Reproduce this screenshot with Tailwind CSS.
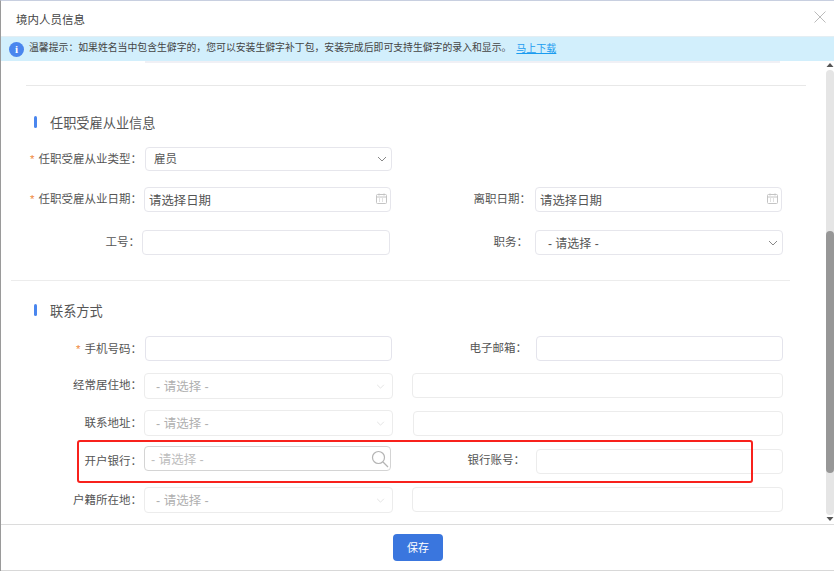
<!DOCTYPE html>
<html lang="zh-CN">
<head>
<meta charset="utf-8">
<script src="https://cdn.jsdelivr.net/npm/@tailwindcss/browser@4"></script>
</head>
<body class="bg-white">
<div class="relative w-[834px] h-[571px] overflow-hidden flex flex-col bg-white border-l border-l-[#9a9a9a] border-t border-t-[#c8cfe0] font-['Liberation_Sans','Noto_Sans_CJK_SC',sans-serif] text-[11.5px] text-[#555]">
  <header class="h-[35px] shrink-0 flex items-center justify-between pl-[15px] pr-[8px]">
    <h1 class="pt-[4px] text-[11.5px] font-normal text-[#444]">境内人员信息</h1>
    <svg class="w-[12px] h-[12px] mb-[3px]" viewBox="0 0 12 12" fill="none" stroke="#bbb" stroke-width="1"><path d="M.5.5l11 11M11.5.5l-11 11"/></svg>
  </header>
  <div class="h-[25px] shrink-0 flex items-center bg-[#d2effc] border-t border-t-[#e4eef3] pl-[8px] text-[#444]">
    <span class="w-[15px] h-[15px] rounded-full bg-[#4a86ee] text-white flex items-center justify-center text-[11px] font-bold font-['Liberation_Serif',serif]">i</span>
    <span class="ml-[5px] pb-[2px] text-[9.86px]">温馨提示：如果姓名当中包含生僻字的，您可以安装生僻字补丁包，安装完成后即可支持生僻字的录入和显示。</span>
    <a class="ml-[5px] pb-[2px] text-[10px] text-[#1a9cf0] underline">马上下载</a>
  </div>
  <div class="flex-1 flex min-h-0">
    <main class="w-[825px] shrink-0 overflow-hidden">
      <div class="ml-[144px] w-[635px] h-[2px] bg-[#f0f0f5]"></div>
      <div class="mt-[22px] ml-[25px] w-[780px] h-px bg-[#e8e8e8]"></div>

      <div class="mt-[30px] h-[12px] flex items-center">
        <span class="ml-[33px] w-[3px] h-[12px] rounded-sm bg-[#4a86ee]"></span>
        <h2 class="ml-[13px] pt-[4px] text-[13.2px] font-normal text-[#555]">任职受雇从业信息</h2>
      </div>

      <div class="mt-[19px] h-[24px] flex items-center">
        <label class="w-[141px] pt-[2px] text-right"><span class="text-[#f08a3c] mr-[4px]">*</span>任职受雇从业类型：</label>
        <div class="ml-[3px] w-[247px] h-[24px] flex items-center justify-between pl-[8px] pr-[4px] border border-[#e6e6ec] rounded-[4px]">
          <span class="pt-[2px]">雇员</span>
          <svg class="w-[10px] h-[6px]" viewBox="0 0 10 6" fill="none" stroke="#888"><path d="M1 1l4 4 4-4"/></svg>
        </div>
      </div>

      <div class="mt-[16px] h-[25px] flex items-center">
        <label class="w-[141px] text-right"><span class="text-[#f08a3c] mr-[4px]">*</span>任职受雇从业日期：</label>
        <div class="ml-[2px] w-[247px] h-[25px] flex items-center justify-between pl-[4px] pr-[2px] border border-[#e6e6ec] rounded-[4px] text-[12.4px]">
          <span class="pt-[3px]">请选择日期</span>
          <svg class="w-[11px] h-[11px] mb-[2px] mr-[1px]" viewBox="0 0 11 11" fill="none" stroke="#c4c4c4"><rect x=".5" y="1.5" width="10" height="9" rx="1"/><path d="M.5 4h10M3 .5v2M8 .5v2M3 6h1M6 6h1M3 8h1M6 8h1"/></svg>
        </div>
        <label class="ml-[49px] w-[91px] text-right">离职日期：</label>
        <div class="ml-[4px] w-[247px] h-[25px] flex items-center justify-between pl-[4px] pr-[2px] border border-[#e6e6ec] rounded-[4px] text-[12.4px]">
          <span class="pt-[3px]">请选择日期</span>
          <svg class="w-[11px] h-[11px] mb-[2px] mr-[1px]" viewBox="0 0 11 11" fill="none" stroke="#c4c4c4"><rect x=".5" y="1.5" width="10" height="9" rx="1"/><path d="M.5 4h10M3 .5v2M8 .5v2M3 6h1M6 6h1M3 8h1M6 8h1"/></svg>
        </div>
      </div>

      <div class="mt-[18px] h-[25px] flex items-center">
        <label class="w-[139px] text-right">工号：</label>
        <div class="ml-[2px] w-[248px] h-[25px] border border-[#e6e6ec] rounded-[4px]"></div>
        <label class="ml-[50px] w-[88px] text-right">职务：</label>
        <div class="ml-[7px] w-[248px] h-[25px] flex items-center justify-between pl-[12px] pr-[4px] border border-[#e6e6ec] rounded-[4px] text-[12px]">
          <span class="pt-[2px]">- 请选择 -</span>
          <svg class="w-[10px] h-[6px]" viewBox="0 0 10 6" fill="none" stroke="#888"><path d="M1 1l4 4 4-4"/></svg>
        </div>
      </div>

      <div class="mt-[25px] ml-[10px] w-[779px] h-px bg-[#ececec]"></div>

      <div class="mt-[23px] h-[12px] flex items-center">
        <span class="ml-[33px] w-[3px] h-[12px] rounded-sm bg-[#4a86ee]"></span>
        <h2 class="ml-[13px] pt-[4px] text-[13.2px] font-normal text-[#555]">联系方式</h2>
      </div>

      <div class="mt-[20px] h-[25px] flex items-center">
        <label class="w-[141px] pt-[2px] text-right"><span class="text-[#f08a3c] mr-[4px]">*</span>手机号码：</label>
        <div class="ml-[3px] w-[247px] h-[25px] border border-[#e4e4ec] rounded-[4px]"></div>
        <label class="ml-[45px] w-[90px] text-right">电子邮箱：</label>
        <div class="ml-[9px] w-[247px] h-[25px] border border-[#e4e4ec] rounded-[4px]"></div>
      </div>

      <div class="mt-[12px] h-[26px] flex items-start">
        <label class="w-[141px] h-[25px] leading-[25px] text-right">经常居住地：</label>
        <div class="ml-[2px] w-[249px] h-[26px] flex items-center justify-between pl-[11px] pr-[7px] border border-[#ececec] rounded-[4px] text-[12.5px] text-[#b0b0b0]">
          <span class="pt-[2px]">- 请选择 -</span>
          <svg class="w-[9px] h-[5px]" viewBox="0 0 10 6" fill="none" stroke="#ddd"><path d="M1 1l4 4 4-4"/></svg>
        </div>
        <div class="ml-[19px] w-[371px] h-[25px] border border-[#ececec] rounded-[4px]"></div>
      </div>

      <div class="mt-[11px] h-[26px] flex items-start">
        <label class="w-[141px] h-[27px] leading-[27px] text-right">联系地址：</label>
        <div class="ml-[2px] w-[249px] h-[26px] flex items-center justify-between pl-[11px] pr-[7px] border border-[#ececec] rounded-[4px] text-[12.5px] text-[#b0b0b0]">
          <span class="pt-[2px]">- 请选择 -</span>
          <svg class="w-[9px] h-[5px]" viewBox="0 0 10 6" fill="none" stroke="#ddd"><path d="M1 1l4 4 4-4"/></svg>
        </div>
        <div class="ml-[20px] mt-px w-[370px] h-[25px] border border-[#ececec] rounded-[4px]"></div>
      </div>

      <div class="mt-[10px] h-[28px] flex items-start">
        <label class="w-[141px] h-[30px] leading-[30px] text-right">开户银行：</label>
        <div class="ml-[2px] w-[247px] h-[25px] flex items-center justify-between pl-[6px] pr-px border border-[#d4d4d4] rounded-[4px] text-[12.5px] text-[#bdbdbd]">
          <span class="pt-[3px]">- 请选择 -</span>
          <svg class="w-[18px] h-[18px]" viewBox="0 0 18 18" fill="none" stroke="#b4b4b4" stroke-width="1.2"><circle cx="7.5" cy="7.5" r="6"/><path d="M12 12l5 5"/></svg>
        </div>
        <label class="ml-[43px] w-[91px] h-[28px] leading-[28px] text-right">银行账号：</label>
        <div class="ml-[11px] mt-[3px] w-[247px] h-[25px] border border-[#ececec] rounded-[4px]"></div>
      </div>

      <div class="mt-[13px] h-[26px] flex items-start">
        <label class="w-[141px] h-[27px] leading-[27px] text-right">户籍所在地：</label>
        <div class="ml-[2px] w-[249px] h-[26px] flex items-center justify-between pl-[11px] pr-[7px] border border-[#ececec] rounded-[4px] text-[12.5px] text-[#b0b0b0]">
          <span class="pt-[2px]">- 请选择 -</span>
          <svg class="w-[9px] h-[5px]" viewBox="0 0 10 6" fill="none" stroke="#ddd"><path d="M1 1l4 4 4-4"/></svg>
        </div>
        <div class="ml-[19px] w-[371px] h-[25px] border border-[#ececec] rounded-[4px]"></div>
      </div>
    </main>
    <div class="w-[8px] shrink-0 flex flex-col">
      <svg class="mt-[2px] w-[8px] h-[4px] shrink-0" viewBox="0 0 8 4" fill="#555"><path d="M4 0l3.5 4h-7z"/></svg>
      <div class="mt-[3px] h-[445px] w-[8px] shrink-0 rounded-[4px] bg-[#e5e5e5]">
        <div class="mt-[161px] h-[242px] rounded-[4px] bg-[#979797]"></div>
      </div>
      <svg class="mt-[2px] w-[8px] h-[4px] shrink-0" viewBox="0 0 8 4" fill="#555"><path d="M4 4L.5 0h7z"/></svg>
    </div>
  </div>
  <footer class="h-[47px] shrink-0 flex justify-center items-center pl-[1px] border-t border-t-[#dcdcdc] border-b border-b-[#d8d8d8]">
    <button class="w-[50px] h-[27px] mb-[1px] pt-[2px] rounded-[4px] bg-[#3a76de] text-white text-[11px]">保存</button>
  </footer>
  <div class="absolute left-[76px] top-[439px] w-[676px] h-[43px] border-2 border-[#f8211c] rounded-[3px]"></div>
</div>
</body>
</html>
